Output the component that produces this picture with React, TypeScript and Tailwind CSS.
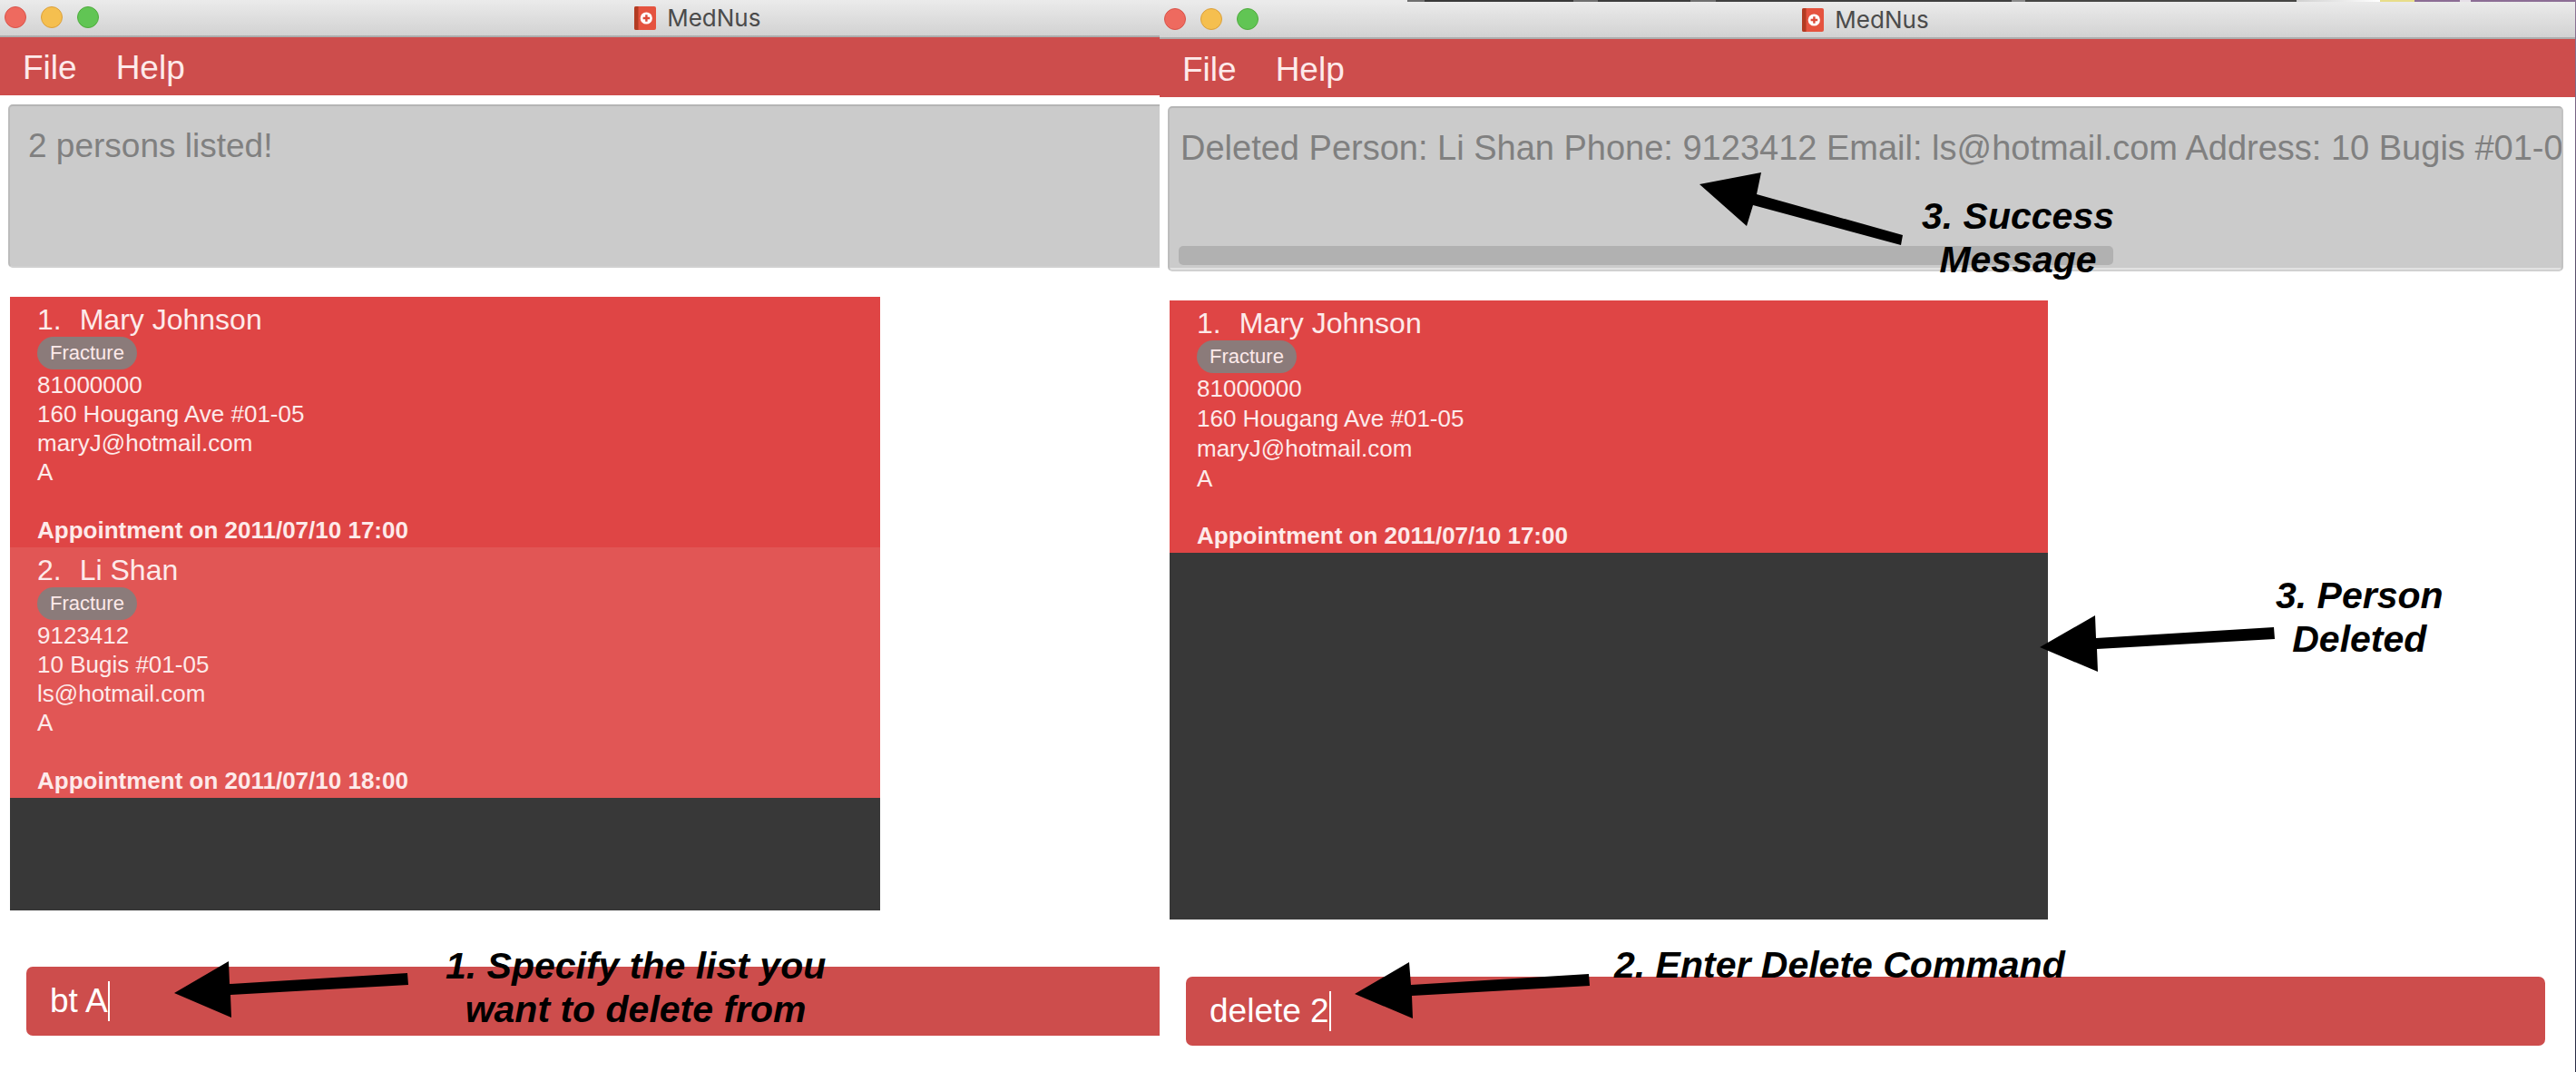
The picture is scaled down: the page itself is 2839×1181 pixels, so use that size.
import React from "react";

type Person = {
  index: number;
  name: string;
  tag: string;
  phone: string;
  address: string;
  email: string;
  list: string;
  appointment: string;
};

const mary: Person = {
  index: 1,
  name: "Mary Johnson",
  tag: "Fracture",
  phone: "81000000",
  address: "160 Hougang Ave #01-05",
  email: "maryJ@hotmail.com",
  list: "A",
  appointment: "Appointment on 2011/07/10 17:00",
};

const liShan: Person = {
  index: 2,
  name: "Li Shan",
  tag: "Fracture",
  phone: "9123412",
  address: "10 Bugis #01-05",
  email: "ls@hotmail.com",
  list: "A",
  appointment: "Appointment on 2011/07/10 18:00",
};

function BookIcon() {
  return (
    <svg viewBox="0 0 24 26" className="h-[26px] w-6 shrink-0" aria-hidden="true">
      <rect width="24" height="26" rx="2" fill="#e5533f" />
      <path d="M2 0h2.5v26H2a2 2 0 0 1-2-2V2a2 2 0 0 1 2-2z" fill="#b23b22" />
      <circle cx="13.3" cy="13" r="6.6" fill="#fff" />
      <path d="M12.2 9.2h2.4v2.6h2.6v2.4h-2.6v2.6h-2.4v-2.6H9.6v-2.4h2.6z" fill="#dc4a38" />
    </svg>
  );
}

function TitleBar({ className }: { className: string }) {
  return (
    <header
      className={
        "relative flex h-[41px] items-center justify-center border-b-2 border-[#adadad] bg-linear-to-b from-[#ebebeb] to-[#d2d2d2] " +
        className
      }
    >
      <div className="absolute left-[5px] top-[7px] flex gap-4">
        <button aria-label="Close" className="size-6 rounded-full border border-[#d9534a] bg-[#ee6a5f]" />
        <button aria-label="Minimize" className="size-6 rounded-full border border-[#dba03c] bg-[#f5bf4f]" />
        <button aria-label="Zoom" className="size-6 rounded-full border border-[#4fab3d] bg-[#61c554]" />
      </div>
      <h1 className="flex items-center gap-3 font-['Inter'] text-[26px] leading-[30px] text-[#4b4b4b]">
        <BookIcon />
        MedNus
      </h1>
    </header>
  );
}

function MenuBar() {
  return (
    <nav className="flex h-16 items-center gap-[43px] bg-[#cd4d4c] pl-[25px] pt-1 text-[37px] leading-[42px] text-[#fdeaea]">
      <button>File</button>
      <button>Help</button>
    </nav>
  );
}

function ResultDisplay({
  text,
  scroll,
  className,
  textClass,
}: {
  text: string;
  scroll?: boolean;
  className: string;
  textClass: string;
}) {
  return (
    <div
      className={
        "flex flex-col overflow-hidden rounded-[5px] border-2 border-b-[#d0d0d0] border-l-[#bcbcbc] border-r-[#c2c2c2] border-t-[#b5b5b5] bg-[#cbcbcb] " +
        className
      }
    >
      <textarea
        readOnly
        aria-label="Result"
        wrap="off"
        value={text}
        className={
          "block w-full flex-1 resize-none overflow-hidden bg-transparent pt-[23px] leading-[42px] text-[#808080] outline-none " +
          textClass
        }
      />
      {scroll && (
        <div className="border-b-2 border-[#e2e2e2] px-[10px] pb-[3px]">
          <div className="h-[21px] w-[68%] rounded-[5px] bg-[#b1b1b1]" />
        </div>
      )}
    </div>
  );
}

function PersonCard({ person, detailClass, apptClass }: { person: Person; detailClass: string; apptClass: string }) {
  return (
    <li className="flex flex-col items-start bg-[#df4545] pb-[3px] pl-[30px] pt-[6px] text-[26px] text-[#fdeaea] even:bg-[#e15655]">
      <h2 className="flex gap-5 text-[32px] leading-[38px]">
        <span>{person.index}.</span>
        <span>{person.name}</span>
      </h2>
      <span className="mb-px rounded-full bg-[#8b7b7a] px-[14px] text-[22px] leading-[36px]">{person.tag}</span>
      <div className={detailClass}>
        <p>{person.phone}</p>
        <p>{person.address}</p>
        <p>{person.email}</p>
        <p>{person.list}</p>
      </div>
      <p className={"font-bold leading-8 " + apptClass}>{person.appointment}</p>
    </li>
  );
}

function CommandBox({ value, className }: { value: string; className: string }) {
  return (
    <label className={"flex h-[76px] items-center rounded-[7px] bg-[#cd4d4c] pl-[26px] " + className}>
      <input
        aria-label="Command"
        defaultValue={value}
        className="bg-transparent text-[37px] leading-[44px] text-white outline-none [field-sizing:content]"
      />
      <span className="h-11 w-[2px] bg-white" />
    </label>
  );
}

function Arrow({ points, box, className }: { points: string; box: string; className: string }) {
  return (
    <svg viewBox={box} className={"absolute " + className} aria-hidden="true">
      <polygon points={points} fill="#000" />
    </svg>
  );
}

function Note({ lines, className }: { lines: string[]; className: string }) {
  return (
    <p className={"absolute whitespace-nowrap text-center text-[41px] font-bold italic leading-[48px] text-black " + className}>
      {lines.map((line) => (
        <span key={line} className="block">
          {line}
        </span>
      ))}
    </p>
  );
}

function DesktopStrip() {
  return (
    <div className="flex h-[2px]">
      <div className="flex-[273] bg-[#ebebeb]" />
      <div className="flex-[19] bg-[#6f6f6f]" />
      <div className="flex-[164] bg-[#383838]" />
      <div className="flex-[27] bg-[#6f6f6f]" />
      <div className="flex-[102] bg-[#3c3c3c]" />
      <div className="flex-[28] bg-[#6f6f6f]" />
      <div className="flex-[326] bg-[#3f3f3f]" />
      <div className="flex-[15] bg-[#8a8a8a]" />
      <div className="flex-[299] bg-[#464644]" />
      <div className="flex-[92] bg-linear-to-r from-[#d0d0d0] to-white" />
      <div className="flex-[38] bg-[#e8dd8a]" />
      <div className="flex-[50] bg-[#8c6d95]" />
      <div className="flex-[12] bg-[#e6dfe8]" />
      <div className="flex-[115] bg-[#8c6d95]" />
    </div>
  );
}

export default function App() {
  return (
    <main className="grid min-h-screen grid-cols-[1278fr_1561fr] bg-white font-['Liberation_Sans',Arial,sans-serif]">
      <section className="relative overflow-hidden">
        <div className="w-[120%]">
          <TitleBar className="pl-1" />
          <MenuBar />
          <ResultDisplay
            text="2 persons listed!"
            className="ml-[9px] mt-[10px] h-[180px]"
            textClass="pl-5 text-[37px]"
          />
          <div className="mt-8 pl-[11px]">
            <ul className="min-h-[676px] w-[63%] bg-[#383838]">
              <PersonCard person={mary} detailClass="leading-8" apptClass="mt-8" />
              <PersonCard person={liShan} detailClass="leading-8" apptClass="mt-8" />
            </ul>
          </div>
          <CommandBox value="bt A" className="ml-[29px] mt-[62px]" />
        </div>
        <Arrow
          box="190 1058 262 64"
          className="left-[190px] top-[1058px] h-16 w-[262px]"
          points="192,1094 252,1059 253,1084 449,1072 450,1085 254,1096 255,1121"
        />
        <Note lines={["1. Specify the list you", "want to delete from"]} className="left-[491px] top-[1040px]" />
      </section>

      <section className="relative flex overflow-hidden">
        <div className="min-w-0 flex-1">
          <DesktopStrip />
          <TitleBar className="pr-1" />
          <MenuBar />
          <ResultDisplay
            scroll
            text="Deleted Person: Li Shan Phone: 9123412 Email: ls@hotmail.com Address: 10 Bugis #01-0"
            className="ml-[9px] mr-[13px] mt-[10px] h-[182px]"
            textClass="pl-3 text-[38px]"
          />
          <div className="mt-8 pl-[11px]">
            <ul className="min-h-[682px] w-[62.5%] bg-[#383838]">
              <PersonCard person={mary} detailClass="leading-[33px]" apptClass="mt-[30px]" />
            </ul>
          </div>
          <CommandBox value="delete 2" className="ml-[29px] mr-[33px] mt-[63px]" />
        </div>
        <div className="w-px bg-linear-to-b from-[#8d7596] via-[#2a2d45] to-[#2a2d45]" />

        <Arrow
          box="1870 188 230 84"
          className="left-[592px] top-[188px] h-[84px] w-[230px]"
          points="1873,203 1941,190 1936,214 2097,259 2095,270 1932,226 1925,249"
        />
        <Note lines={["3. Success", "Message"]} className="left-[840px] top-[214px]" />
        <Arrow
          box="2246 676 264 66"
          className="left-[968px] top-[676px] h-[66px] w-[264px]"
          points="2248,713 2309,678 2310,703 2506,691 2507,704 2311,715 2312,740"
        />
        <Note lines={["3. Person", "Deleted"]} className="left-[1230px] top-[632px]" />
        <Arrow
          box="1490 1058 264 66"
          className="left-[212px] top-[1058px] h-[66px] w-[264px]"
          points="1493,1095 1553,1060 1555,1085 1751,1073 1752,1086 1556,1097 1557,1122"
        />
        <Note lines={["2. Enter Delete Command"]} className="left-[501px] top-[1039px]" />
      </section>
    </main>
  );
}
